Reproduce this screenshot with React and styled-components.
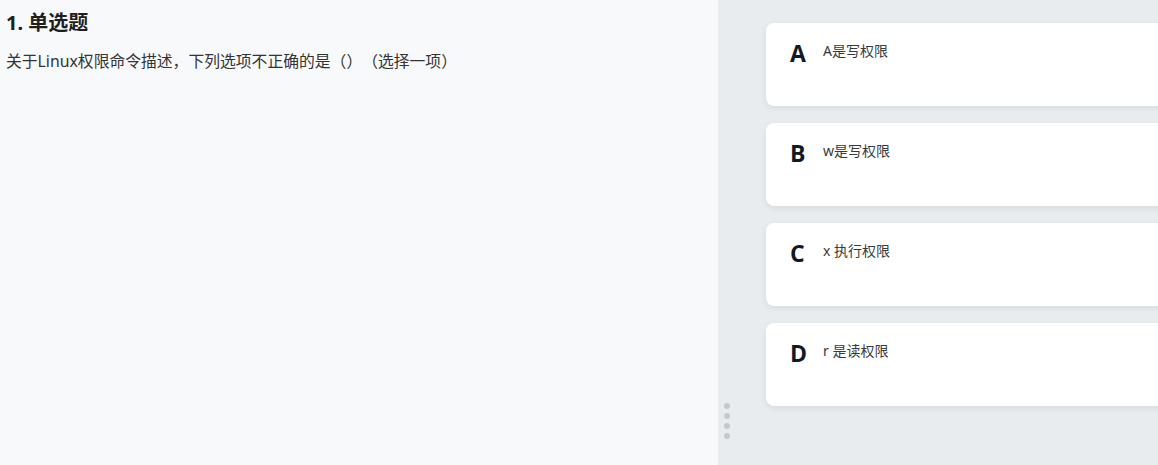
import React from "react";
import styled, { createGlobalStyle } from "styled-components";

const Global = createGlobalStyle`
  html, body { margin: 0; padding: 0; height: 100%; overflow: hidden; }
  body { font-family: "Noto Sans", "Noto Sans CJK SC", sans-serif; }
  #root { height: 100%; }
`;

const Layout = styled.div`
  display: grid;
  grid-template-columns: 718px 1fr;
  height: 465px;
  width: 1158px;
  overflow: hidden;
`;

const Left = styled.section`
  background: #f8f9fb;
  padding: 9px 6px;
  box-sizing: border-box;
`;

const Title = styled.h2`
  margin: 0;
  font-size: 20px;
  font-weight: 700;
  color: #1f1f1f;
  line-height: 28px;
`;

const Question = styled.p`
  margin: 13px 0 0;
  font-size: 15.8px;
  color: #333;
  line-height: 22px;
  text-spacing-trim: space-all;
  font-feature-settings: "chws" 0, "halt" 0, "vchw" 0;
`;

const Right = styled.section`
  position: relative;
  background: #e9ecef;
  padding: 23px 0 0 48px;
  box-sizing: border-box;
  display: flex;
  flex-direction: column;
  gap: 17px;
  overflow: hidden;
`;

const Card = styled.div`
  width: 460px;
  height: 83px;
  box-sizing: border-box;
  background: #fff;
  border-radius: 8px;
  box-shadow: 0 2px 6px rgba(0, 0, 0, 0.08);
  display: flex;
  align-items: flex-start;
  padding: 15px 24px;
  gap: 15px;
`;

const Letter = styled.span`
  font-family: "Open Sans", "Noto Sans", sans-serif;
  font-size: 23px;
  font-weight: 700;
  color: #111827;
  line-height: 30px;
  width: 18px;
`;

const OptionText = styled.span`
  font-size: 14px;
  color: #3a3a3a;
  line-height: 18px;
  padding-top: 4px;
`;

const Handle = styled.div`
  position: absolute;
  left: 6px;
  top: 403px;
  display: flex;
  flex-direction: column;
  gap: 4px;
`;

const Dot = styled.span`
  width: 6px;
  height: 6px;
  border-radius: 50%;
  background: #c6c8cc;
`;

const options = [
  ["A", "A是写权限"],
  ["B", "w是写权限"],
  ["C", "x 执行权限"],
  ["D", "r 是读权限"],
];

export default function App() {
  return (
    <>
      <Global />
      <Layout>
        <Left>
          <Title>1. 单选题</Title>
          <Question>关于Linux权限命令描述，下列选项不正确的是（）（选择一项）</Question>
        </Left>
        <Right>
          {options.map(([l, t]) => (
            <Card key={l}>
              <Letter>{l}</Letter>
              <OptionText>{t}</OptionText>
            </Card>
          ))}
          <Handle>
            <Dot />
            <Dot />
            <Dot />
            <Dot />
          </Handle>
        </Right>
      </Layout>
    </>
  );
}
